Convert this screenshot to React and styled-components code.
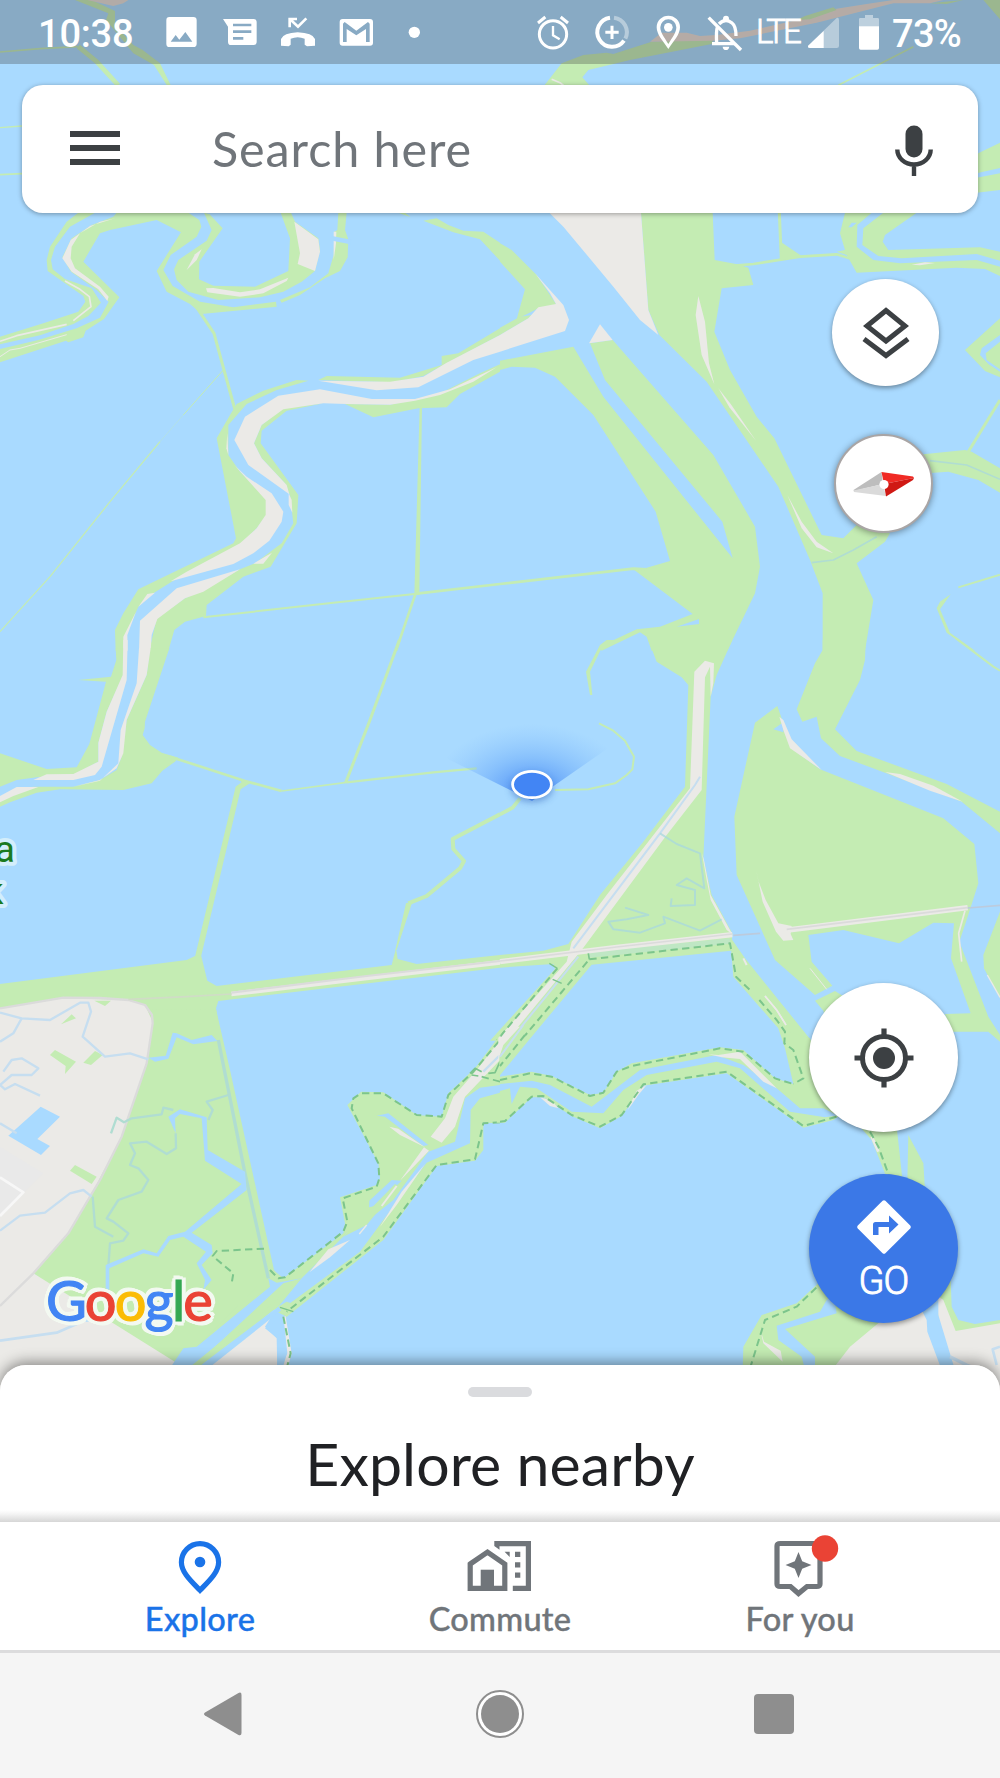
import React from "react";
import styled, { createGlobalStyle, css } from "styled-components";

const c = {
  water: "#a9daff",
  green: "#c4ecb3",
  sand: "#ebeae7",
  road: "#dbdbdb",
  creek: "#c6def0",
  marsh: "#b0ddd2",
  trail: "#7cc58c",
  ink: "#3c4043",
  grey: "#70757a",
  blue: "#1a73e8",
};

const Global = createGlobalStyle`
  * { box-sizing: border-box; }
  body { margin: 0; background: #fff; }
`;

/* ---------- layout ---------- */

const Screen = styled.div`
  width: 1000px;
  height: 1778px;
  overflow: hidden;
  display: grid;
  grid-template-rows: 1365px 157px 131px 125px;
  font-family: Lato, "Noto Sans", sans-serif;
`;

const MapArea = styled.main`
  display: grid;
  grid-template: 1365px / 1000px;
  background: ${c.water};
`;

const MapCanvas = styled.svg`
  grid-area: 1 / 1;
  display: block;
  width: 1000px;
  height: 1420px;
`;

const MapOverlay = styled.div`
  grid-area: 1 / 1;
  display: flex;
  flex-direction: column;
  z-index: 1;
`;

const StatusBar = styled.header`
  height: 64px;
  flex: none;
  display: flex;
  align-items: flex-start;
  background: rgba(60, 60, 60, 0.3);
  color: #fff;
  font-family: Roboto, sans-serif;
`;

const StatusText = styled.span`
  flex: none;
  width: ${(p) => p.$w}px;
  padding-left: ${(p) => p.$pad || 0}px;
  padding-top: ${(p) => p.$top || 0}px;
  font-size: ${(p) => p.$size}px;
  font-weight: ${(p) => p.$weight};
  letter-spacing: ${(p) => p.$track || 0}px;
  -webkit-text-stroke: ${(p) => p.$thicken || 0}px currentColor;
  line-height: 64px;
  white-space: nowrap;
`;

const StatusIcon = styled.svg`
  flex: none;
  display: block;
  width: ${(p) => p.$w || 58}px;
  height: 64px;
  fill: #fff;
`;

const Spacer = styled.div`
  flex: 1;
`;

const SearchBar = styled.div`
  flex: none;
  height: 128px;
  margin: 21px 22px 0;
  padding: 0 45px 0 48px;
  display: flex;
  align-items: center;
  background: #fff;
  border-radius: 21px;
  box-shadow: 0 1px 5px rgba(0, 0, 0, 0.35);
`;

const MenuButton = styled.button`
  width: 50px;
  height: 34px;
  padding: 0;
  border: 0;
  background: none;
  display: flex;
  flex-direction: column;
  justify-content: space-between;
  align-items: stretch;
  margin-top: -2px;
  &::before, &::after, & > span {
    content: "";
    display: block;
    height: 6px;
    background: ${c.ink};
  }
`;

const SearchField = styled.div`
  flex: 1;
  padding: 0 0 2px 92px;
  font-size: 48.5px;
  letter-spacing: 0.9px;
  color: ${c.grey};
`;

const MicIcon = styled.svg`
  width: 38px;
  height: 52px;
  margin-top: 3px;
  display: block;
`;

const Controls = styled.div`
  flex: 1;
  display: flex;
  flex-direction: column;
  align-items: center;
  align-self: flex-end;
  width: 233px;
  padding-top: 66px;
`;

const roundButton = css`
  flex: none;
  border: 0;
  padding: 0;
  border-radius: 50%;
  display: flex;
  flex-direction: column;
  align-items: center;
  justify-content: center;
`;

const MapButton = styled.button`
  ${roundButton}
  width: ${(p) => p.$size}px;
  height: ${(p) => p.$size}px;
  margin-top: ${(p) => p.$gap || 0}px;
  margin-left: ${(p) => p.$shift || 0}px;
  padding-top: ${(p) => p.$pad || 0}px;
  background: ${(p) => p.$bg || "#fff"};
  box-shadow: 0 2px 5px rgba(0, 0, 0, 0.4);
`;

const CompassButton = styled(MapButton)`
  border: 2px solid #a9a5a5;
  box-shadow: 0 1px 7px rgba(0, 0, 0, 0.4);
`;

const ButtonIcon = styled.svg`
  display: block;
  width: ${(p) => p.$w}px;
  height: ${(p) => p.$h}px;
`;

const GoLabel = styled.span`
  margin-top: 4px;
  font: 300 38px/46px Roboto, sans-serif;
  letter-spacing: -0.8px;
  color: #fff;
  -webkit-text-stroke: 0.9px #fff;
`;

const LogoRow = styled.div`
  grid-area: 1 / 1;
  align-self: end;
  justify-self: start;
  z-index: 1;
  padding: 0 0 30px 46px;
  font: 400 56px/70px Lato, sans-serif;
  letter-spacing: -1.8px;
  filter: drop-shadow(3px 1px 0 #f3f9f1) drop-shadow(-3px -1px 0 #f3f9f1)
    drop-shadow(-1px 3px 0 #f3f9f1) drop-shadow(1px -3px 0 #f3f9f1);
`;

const LogoLetter = styled.span`
  color: ${(p) => p.$color};
  -webkit-text-stroke: 1.2px ${(p) => p.$color};
`;

const BottomSheet = styled.section`
  position: relative;
  z-index: 2;
  display: flex;
  flex-direction: column;
  align-items: center;
  padding-top: 22px;
  background: linear-gradient(#fff 145px, #f4f4f4 149px, #d6d6d6 157px);
  border-radius: 26px 26px 0 0;
  box-shadow: 0 -3px 14px rgba(0, 0, 0, 0.42);
`;

const Handle = styled.div`
  width: 64px;
  height: 10px;
  border-radius: 5px;
  background: #dadbde;
`;

const SheetTitle = styled.h1`
  margin: 31px 0 0;
  font-size: 59px;
  line-height: 72px;
  font-weight: 400;
  letter-spacing: 0.1px;
  color: #202124;
`;

const TabBar = styled.nav`
  position: relative;
  z-index: 3;
  display: grid;
  grid-template-columns: 300px 300px 300px;
  justify-content: center;
  background: #fff;
  border-bottom: 3px solid #dcdcdd;
`;

const Tab = styled.a`
  display: flex;
  flex-direction: column;
  align-items: center;
  padding-top: 12px;
  font-size: 32.5px;
  line-height: 42px;
  font-weight: 500;
  letter-spacing: 0.3px;
  -webkit-text-stroke: 0.4px currentColor;
  color: ${(p) => (p.$active ? c.blue : c.grey)};
`;

const TabIcon = styled.svg`
  display: block;
  width: 90px;
  height: 64px;
  fill: currentColor;
`;

const SystemNav = styled.footer`
  display: flex;
  align-items: center;
  justify-content: space-between;
  padding: 0 205px 3px 203px;
  background: #f5f5f5;
`;

const SystemIcon = styled.svg`
  display: block;
  width: ${(p) => p.$w}px;
  margin-left: ${(p) => p.$nudge || 0}px;
  height: 50px;
  fill: #8e8e8e;
`;

/* ---------- map drawing helpers: each block is drawn at three units per pixel ---------- */

const Block = ({ x, y, children }) => (
  <g transform={`translate(${x} ${y}) scale(0.333333)`}>{children}</g>
);
const P = ({ f = c.green, d }) => <polygon points={d} fill={f} />;
const L = ({ s = c.green, w = 7, d, dash }) => (
  <polyline points={d} fill="none" stroke={s} strokeWidth={w} strokeDasharray={dash} strokeLinejoin="round" />
);
const Trail = ({ d }) => <L s={c.trail} w={6} dash="22 13" d={d} />;

function North() {
  return (
    <>
      <Block x={0} y={0}>
        <P d="225,0 275,0 345,33 345,75 400,135 428,150 480,190 512,255 500,255 462,195 400,160 318,60 325,40" />
        <P f="#e6dcd6" d="262,0 385,0 370,10 340,18" />
        <L d="0,156 120,146 235,140" w={5} />
        <L d="235,140 290,185 355,256" w={14} />
        <L d="0,383 66,378" w={4} />
        <L d="0,524 66,521" w={5} />
      </Block>
      <Block x={500} y={0}>
        <P d="130,260 185,190 250,165 320,158 340,162 455,125 640,118 635,132 390,180 265,210 247,232 272,260" />
        <P f="#eadcd5" d="450,125 485,98 560,98 600,108 650,105 750,92 900,58 1000,28 1100,12 1180,0 1330,0 1290,10 1180,10 950,68 720,115 640,122" />
        <P d="890,60 915,48 1000,22 1010,30 930,58" />
        <P d="1290,10 1390,0 1340,12" />
        <P d="1450,0 1500,0 1500,58" />
        <L d="1015,256 1240,140" w={5} />
        <P d="1430,462 1500,428 1500,504 1430,520" />
        <P d="1430,533 1500,520 1500,570 1430,578" />
        <L s={c.sand} w={5} d="155,238 180,248 192,258" />
      </Block>
      <Block x={0} y={200}>
        <P d="235,38 200,65 150,140 140,180 143,213 195,250 250,288 256,305 235,335 130,370 0,410 0,433 120,406 220,372 265,348 303,308 275,265 195,237 158,208 153,180 165,140 210,80 285,38" />
        <P d="350,38 340,50 275,75 215,115 187,172 213,215 290,270 326,305 300,353 230,385 115,420 0,447 0,487 198,422 205,427 250,412 257,392 312,357 358,292 250,185 300,100 330,90 470,60 543,97 500,165 470,213 500,275 570,312 605,342 830,320 828,305 700,322 600,305 518,258 490,210 512,165 590,110 604,80 598,60 565,38" />
        <P d="612,38 628,42 668,85 598,185 597,238 640,257 765,260 865,213 870,115 842,38 873,38 885,65 955,115 960,150 945,213 905,245 850,275 780,292 655,300 565,275 530,240 522,208 535,180 620,122 635,90" />
        <P f={c.sand} d="883,65 955,118 960,155 945,213 893,192 900,160" />
        <P f={c.sand} d="618,265 640,264 720,277 780,268 865,233 860,243 790,280 720,290 622,277" />
        <P f={c.sand} d="605,148 585,163 560,210 590,180" />
        <P f={c.sand} d="345,55 300,65 240,100 215,140 212,175 225,205 300,260 326,290 322,303 295,268 215,215 187,175 212,120 270,78" />
        <L s={c.sand} w={5} d="195,243 240,268 268,290 273,320 220,362" />
        <L s={c.sand} w={5} d="0,424 50,407 200,373" />
        <L s={c.sand} w={3} d="0,470 30,450 60,445 200,404" />
        <P d="845,308 840,300 930,262 985,220 1001,165 1003,95 1012,90 1015,38 1040,38 1035,90 1045,118 1043,172 1020,213 975,235 900,285" />
        <P f={c.sand} d="1001,95 1009,95 1008,130 1001,180" />
        <L s={c.water} w={14} d="995,115 1052,126" />
        <L d="590,322 642,400 672,510 705,630" w={9} />
        <L d="670,510 550,645" w={3} />
        <L d="550,645 480,725" w={1} />
        <L d="480,725 330,905 150,1130 0,1295" w={4} />
        <P d="690,645 710,612 790,572 890,540 925,542 830,570 740,612 685,675 685,765 720,815 800,895 800,945 770,985 720,1034 515,1145 460,1180 415,1220 380,1300 372,1352 347,1352 345,1290 370,1240 415,1168 700,1030 708,1015 650,715" />
        <P f={c.sand} d="682,700 685,765 679,745" />
        <P f={c.sand} d="703,795 740,830 815,880 850,935 845,965 808,1022 760,1060 700,1092 512,1144 560,1115 720,1030 770,985 797,945 797,900" />
        <P d="1035,612 1120,652 1255,625 1340,622 1380,582 1500,515 1500,493 1440,520 1330,575 1245,598 1170,614" />
        <P d="850,625 970,610 860,632 785,692 782,730 895,885 890,970 812,1100 730,1130 620,1215 618,1248 555,1265 523,1290 505,1352 448,1352 470,1255 555,1195 610,1170 720,1108 765,1090 845,1030 880,970 870,885 855,850 785,775 762,730 785,675" />
        <P f={c.sand} d="835,587 960,568 1115,597 1245,597 1350,568 1490,502 1420,545 1320,585 1245,602 1170,614 1040,612 970,610 850,628 785,675 762,730 785,775 860,855 868,883 745,795 703,720 735,650" />
        <P f={c.sand} d="866,880 875,900 877,938 866,915" />
        <P f={c.sand} d="420,1262 530,1165 720,1108 610,1175 555,1195 472,1257 455,1305 452,1352 417,1352" />
        <P f={c.sand} d="760,1091 790,1091 816,1058 795,1070" />
        <P f={c.sand} d="415,1220 465,1178 442,1182" />
        <P f={c.sand} d="370,1352 370,1310 408,1235 382,1305 383,1352" />
        <P d="955,540 980,528 1200,533 1325,495 1325,468 1375,460 1500,385 1500,405 1340,490 1270,528 1180,547" />
        <P f={c.sand} d="955,542 1170,545 1270,530 1340,488 1500,405 1500,455 1420,480 1255,562 1130,571" />
        <P d="1195,38 1215,38 1232,52" />
        <P d="1270,62 1310,55 1345,75 1390,92 1450,95 1500,128 1500,182 1440,118 1360,97" />
        <P d="1259,620 1266,620 1258,1185 1243,1185" />
        <L d="1500,1152 1250,1181" w={8} />
        <L d="1250,1181 1000,1208 610,1252" w={6} />
        <L d="1247,1180 1188,1352" w={8} />
      </Block>
      <Block x={500} y={200}>
        <P d="0,130 35,150 110,225 170,315 115,325 50,358 75,268 0,185" />
        <P d="0,383 60,350 95,345 85,355 0,405" />
        <P f={c.sand} d="105,220 190,315 207,360 195,393 0,455 0,405 85,355 115,322 168,312 150,280" />
        <P d="423,38 638,38 644,180 712,193 745,203 760,255 665,265 643,395 690,510 770,650 823,715 965,1005 1030,1015 1070,975 1170,1000 1155,1025 1070,1090 1120,1200 1095,1352 968,1352 968,1180 930,1080 835,860 620,545 478,405 445,330" />
        <P f={c.sand} d="148,38 423,38 445,330 475,405 420,360 340,260 190,80" />
        <L d="705,197 760,192 900,170 1010,163 1048,175" w={8} />
        <L d="838,38 844,180" w={9} />
        <P d="846,128 905,168 840,182" />
        <P d="1035,38 1020,100 1035,150 1010,155 1040,165 1070,218 1130,215 1370,203 1455,207 1500,228 1500,200 1430,180 1200,190 1120,180 1070,140 1072,75 1115,38" />
        <P f={c.water} d="1045,82 1055,68 1070,68 1055,82" />
        <P d="1150,38 1090,85 1087,135 1135,168 1205,175 1430,162 1500,182 1500,155 1440,142 1165,150 1148,125 1155,105 1250,38" />
        <P f={c.sand} d="1235,194 1275,187 1305,189 1260,196" />
        <P d="1500,355 1395,450 1455,513 1500,532 1500,515 1465,492 1440,465 1445,445 1500,405" />
        <P d="1500,425 1457,460 1460,480 1500,508" />
        <L d="1500,600 1403,758" w={9} />
        <P d="1270,763 1395,750 1415,755 1500,805 1500,878 1435,840 1345,815 1280,820" />
        <L s={c.marsh} w={5} d="1290,782 1400,795 1500,838" />
        <L s={c.marsh} w={5} d="935,1088 1000,1080 1060,1050 1130,1010" />
        <P f={c.sand} d="595,288 615,365 627,490 643,553 605,465 587,345" />
        <P f={c.sand} d="862,885 905,965 950,1025 1000,1060 950,1042 905,985" />
        <P f={c.sand} d="655,565 692,612 768,722 688,622" />
        <P d="270,430 338,420 640,765 765,980 780,1100 765,1180 682,1352 455,1352 440,1310 420,1297 305,1352 298,1340 410,1288 480,1280 578,1242 400,1108 435,1105 510,1083 467,935 280,645 165,530 105,503 35,500 0,510 0,482 220,440 310,590 698,1075 667,965 315,540" />
        <P f={c.sand} d="300,373 338,420 267,430" />
        <P f={c.water} d="530,1280 597,1257 597,1272" />
        <L d="0,1152 400,1106 440,1108" w={8} />
        <L d="1375,1162 1500,1124" w={6} />
        <P d="1352,1183 1320,1205 1310,1225 1340,1298 1415,1352 1425,1352 1350,1298 1320,1228" />
      </Block>
    </>
  );
}

function Middle() {
  return (
    <>
      <Block x={0} y={640}>
        <P d="347,25 349,60 333,110 235,120 318,125 268,312 230,382 140,387 0,340 0,440 50,420 110,412 220,405 295,365 295,310 320,215 370,105 375,25" />
        <P f={c.sand} d="370,0 383,0 380,120 305,380 285,405 220,420 100,420 140,403 220,402 295,365 295,308 320,215 368,105" />
        <P d="450,25 508,25 435,245 434,265 428,285 450,315 485,338 535,353 525,365 487,392 455,430 370,450 180,448 110,458 30,487 0,500 0,480 50,450 100,440 220,440 300,420 350,390 365,350 380,240 440,105" />
        <P f={c.sand} d="417,25 452,25 440,105 380,240 370,340 350,385 300,420 220,440 300,422 355,370 362,270 410,130" />
        <P f={c.sand} d="0,468 50,441 115,441 40,468 0,487" />
        <L d="510,350 735,423 845,453" w={8} />
        <L d="845,453 1040,427" w={5} />
        <L d="1040,427 1300,397 1430,385" w={7} />
        <L d="1198,0 1110,240 1037,428" w={9} />
        <P d="707,440 725,427 720,420 750,430 722,448 603,950 585,950" />
        <P d="0,1032 560,960 585,948 603,945 622,1022 650,1038 1175,975 1188,925 1193,957 1250,972 1500,945 1500,983 655,1083 648,1105 668,1220 0,1220" />
        <L d="1500,523 1358,597 1360,627 1392,663 1380,685 1280,768 1225,790" w={12} />
        <P d="1218,790 1237,785 1190,930 1186,930" />
        <L s={c.sand} w={14} d="694,1062 1100,1014 1500,967" />
        <L s={c.road} w={6} d="694,1058 1100,1008 1500,963" />
      </Block>
      <Block x={500} y={640}>
        <P d="0,945 130,932 205,912 300,765 430,605 555,440 565,135 545,112 470,65 445,0 697,0 650,105 632,170 610,655 635,765 697,880 693,932 275,974 85,1202 -30,1202 165,987 160,972 0,983" />
        <P d="690,890 735,955 930,1197 940,1230 865,1230 835,1165 700,1010" />
        <P f={c.sand} d="583,95 615,62 642,70 640,130 632,170 630,80 615,112 605,450 500,585 245,930 20,1202 -12,1202 200,965 215,905 320,765 570,445" />
        <P f={c.sand} d="606,640 612,660 632,765 697,883 680,870 632,780 620,720" />
        <L s={c.creek} w={6} d="600,410 585,435 480,580 220,925" />
        <L s={c.creek} w={6} d="235,950 30,1202" />
        <g opacity="0.75">
          <L s="#a9d9de" w={6} d="480,580 530,612 600,640 613,745 560,715 530,735 585,750 585,795 512,798 515,775" />
          <L s="#a9d9de" w={6} d="375,803 445,825 380,838 325,845 340,868 420,878 495,850 490,830 600,872 665,838" />
        </g>
        <L s="#bfe7c4" w={16} d="265,945 690,903" />
        <L s={c.sand} w={16} d="0,965 350,922 697,884" />
        <L s={c.road} w={5} d="0,963 350,921 697,882" />
        <P d="765,248 832,198 850,250 875,325 960,388 1330,535 1423,612 1435,730 1403,830 1378,905 1465,1130 1500,1185 1500,1205 1465,1175 1355,1175 1335,1122 1412,1120 1353,955 1362,850 1300,848 1197,910 1030,870 925,885 935,965 997,1037 945,1065 825,960 710,705 703,530" />
        <P f={c.water} d="820,268 850,247 850,277" />
        <P f={c.sand} d="838,230 850,240 875,298 965,390 870,325 850,270" />
        <P f={c.sand} d="768,688 776,725 797,780 835,850 875,858 872,882 880,900 850,902 828,875 788,785" />
        <L s={c.sand} w={3} d="930,985 980,1048" />
        <P d="945,1082 1005,1053 1080,1100 1000,1230 970,1112" />
        <L s={c.sand} w={16} d="840,873 1403,803" />
        <L s={c.road} w={5} d="860,868 1403,803" />
        <L s="#bccbdd" w={5} d="700,886 780,880" />
        <L s="#bccbdd" w={5} d="1403,804 1500,796" />
        <L s={c.sand} w={5} d="1395,812 1376,880 1385,965" />
        <P d="968,0 1097,0 1095,60 1080,120 1005,268 1070,333 1340,432 1500,515 1500,580 1385,485 1155,398 1020,348 963,295 950,230 907,245 890,208 945,70 968,30" />
        <P f={c.sand} d="1155,396 1200,402 1300,437 1388,485 1290,452" />
        <L d="1368,-5 1480,80 1500,92" w={6} />
        <P d="1500,815 1450,945 1452,985 1500,1075" />
        <L s={c.sand} w={4} d="1462,1005 1500,1072" />
        <P d="350,0 320,0 300,15 258,95 270,165 277,165 270,95 308,18" />
        <L d="297,250 340,272 375,302 402,350 397,388 380,405 345,430 265,448 165,450" w={6} />
        <L d="0,523 38,503 60,475" w={11} />
        <L s={c.sand} w={6} d="730,955 740,975" />
        <L s={c.sand} w={4} d="795,1068 830,1110 858,1155" />
        <L s={c.trail} w={5} d="265,940 268,958" />
        <Trail d="268,958 690,910 708,1010 750,1050" />
        <Trail d="262,965 62,1202" />
        <Trail d="172,985 -10,1202" />
        <L s={c.trail} w={4} d="148,970 172,985" />
        <L s={c.trail} w={4} d="158,1018 185,1030" />
      </Block>
    </>
  );
}

function South() {
  return (
    <>
      <Block x={0} y={960}>
        <P d="0,150 648,148 690,330 822,930 840,955 910,950 640,1230 500,1230 100,940" />
        <P d="820,930 850,955 1030,820 1035,790 1020,712 1130,675 1140,655 1135,610 1042,435 1083,395 1150,397 1250,465 1325,470 1345,400 1425,325 1500,225 1500,490 1450,488 1450,570 1425,602 1310,618 1150,840 860,1070 820,1050 600,1230 520,1230 700,1050" />
        <P f={c.sand} d="0,145 190,115 385,120 435,135 458,185 440,310 365,530 270,710 205,820 100,940 540,1215 560,1400 0,1400" />
        <P f={c.sand} d="600,1225 830,1045 795,1100 830,1135 832,1225" />
        <P f="#e9e9e9" d="0,560 130,640 72,697 0,768" />
        <L s="#f7f7f7" w={8} d="0,652 70,697 0,768" />
        <L s={c.road} w={7} d="0,145 190,113 300,114 385,120 435,135 456,165 458,190 440,310 365,530 300,660 270,710 205,820 100,940 0,1038" />
        <L s="#d0dcc6" w={5} d="385,118 560,110 695,102" />
        <P f={c.water} d="122,440 180,470 112,537 150,558 123,585 25,527" />
        <P d="283,122 333,122 315,138" />
        <P d="183,193 215,163 228,175" />
        <P d="165,270 228,305 195,342 197,318 150,285" />
        <P d="250,308 285,273 308,285 273,315" />
        <P d="225,615 290,650 275,672 210,632" />
        <L s={c.creek} d="0,158 65,175 150,180 240,128 265,128 273,155 248,230 315,290 390,280 445,298" />
        <L s={c.creek} d="65,175 40,220 0,245" />
        <L s={c.creek} d="0,812 60,767 135,758 210,700 250,690 275,710" />
        <L s={c.creek} d="0,490 50,520" />
        <L s={c.creek} d="10,335 35,300 65,295 115,325 95,345 35,345 0,375 15,388 45,372 120,407" />
        <L s={c.creek} w={8} d="0,1142 170,1118 235,1090" />
        <P f={c.water} d="225,1088 265,1070 290,1082" />
        <P f={c.water} d="445,293 497,287 518,218 530,220 575,240 635,225 652,243 580,253 530,232 505,296 465,305" />
        <L s={c.marsh} w={10} d="655,240 735,640 805,955" />
        <L s={c.marsh} w={7} d="685,405 620,425 638,450 625,480" />
        <L s={c.marsh} w={7} d="520,450 490,443 485,463 395,475 372,487 350,473 333,520" />
        <L s={c.marsh} w={7} d="527,520 528,565 500,582 440,545 390,550 405,580 390,615 415,625 445,660 425,695 355,720 320,775 340,785 385,820 370,842 330,850 325,920" />
        <L s={c.marsh} w={7} d="278,710 285,800 340,830" />
        <P f={c.water} d="505,470 540,448 620,472 623,570 735,635 740,690 575,818 635,855 638,880 605,915 635,960 610,990 615,960 590,910 618,875 550,830 510,840 475,890 430,880 328,925 328,990 317,985 317,915 430,868 470,880 505,828 555,815 725,672 615,602 605,475 540,462 525,475 527,520" />
        <P f={c.water} d="805,955 830,968 905,955 840,1000 565,1225 510,1225 550,1165 590,1160 810,980" />
        <P f={c.water} d="1500,375 1440,383 1395,415 1365,545 1285,575 1180,720 1080,800 1040,820 905,955 835,1040 590,1225 625,1225 870,1030 1080,875 1150,780 1280,608 1410,550 1412,450 1440,415 1500,398" />
        <P d="905,955 850,970 575,1225 592,1225" />
        <P f={c.water} d="1130,467 1165,460 1285,555 1270,558 1155,470" />
        <P f={c.sand} d="1168,500 1195,506 1275,562 1200,525" />
        <P f={c.sand} d="1272,562 1287,572 1200,662" />
        <P f={c.water} d="1175,660 1205,662 1125,738 1107,742 1108,722" />
        <P d="1185,672 1195,678 1100,795 1030,830" />
        <L s={c.sand} w={6} d="1190,678 1145,738" />
        <L s={c.sand} w={4} d="1100,795 1078,822" />
        <P f={c.sand} d="1050,840 985,868 928,937 990,892" />
        <P f={c.sand} d="1275,612 1205,695 1138,803 1190,735" />
        <P f={c.sand} d="1500,240 1500,300 1395,410 1365,500 1325,548 1292,530 1335,475 1360,410 1430,330" />
        <L s={c.creek} w={7} d="1500,285 1450,335" />
        <L s={c.sand} w={14} d="850,1070 868,1180 855,1225" />
        <P f={c.water} d="795,1105 850,1065 862,1180 845,1215 832,1215 832,1135" />
        <P d="835,1040 860,1025 890,1035 860,1070" />
        <Trail d="792,866 650,873 638,888 700,940 695,970" />
        <Trail d="810,930 835,955 855,952 1030,815 1042,785 1028,715 1130,680 1138,655 1135,610 1055,445 1060,415 1083,400 1150,400 1250,465 1325,470 1345,405 1420,335 1500,240" />
        <Trail d="1500,487 1450,490 1425,598 1310,615 1150,830 860,1055" />
        <L s={c.trail} w={4} d="840,1042 880,1055" />
        <Trail d="850,1070 872,1180 860,1225" />
        <L s={c.trail} w={5} d="1410,340 1425,325 1445,335" />
        <L s={c.trail} w={5} d="1415,345 1435,348" />
        <L s={c.trail} w={5} dash="22 13" d="1445,350 1500,365" />
        <L s={c.trail} w={5} d="1465,340 1485,338 1500,305" />
      </Block>
      <Block x={500} y={960}>
        <P d="-2,228 60,200 85,242 -2,348" />
        <P f={c.sand} d="-5,233 30,200 60,200 10,255 -5,300" />
        <L s={c.creek} w={6} d="70,195 0,290" />
        <Trail d="75,225 0,318" />
        <L s={c.trail} w={5} dash="22 13" d="15,212 0,232" />
        <P d="0,350 95,335 155,348 270,405 310,398 350,335 395,310 660,262 730,270 825,355 880,372 855,265 835,205 930,235 935,250 1010,465 970,445 900,445 830,385 730,315 650,285 420,330 275,440 150,375 95,362 0,372" />
        <P d="0,393 30,385 35,432 60,380 110,385 215,455 310,460 370,390 440,345 650,305 720,325 870,455 975,472 1020,465 1000,480 910,503 680,340 430,377 365,468 300,505 215,468 130,412 95,412 15,488 -10,488" />
        <P f={c.sand} d="625,283 655,285 720,275 760,315 830,385 790,365 720,297 665,292" />
        <P f={c.sand} d="440,375 415,405 382,452 410,392" />
        <P f={c.sand} d="120,412 155,422 175,445 150,438" />
        <Trail d="0,360 90,340 155,350 270,408 310,398 350,335 395,318 660,265 730,275 825,355 880,372" />
        <Trail d="778,120 830,180 855,215 853,250 880,270 910,355 880,372" />
        <L s={c.sand} w={5} d="795,108 830,150 858,195" />
        <Trail d="0,485 15,483 95,410 130,408 215,465 300,500 365,465 430,373 680,335 910,498 1010,470" />
        <P d="1080,500 1190,500 1208,665 1165,665 1115,540" />
        <L s={c.sand} w={8} d="1115,530 1135,575" />
        <P d="1225,525 1270,610 1275,690 1222,665" />
        <Trail d="1110,515 1135,560 1170,655" />
        <P d="955,970 1352,960 1355,1040 1375,1080 1425,1092 1500,1080 1500,1230 728,1230 730,1160 785,1065 890,1030" />
        <P f={c.sand} d="1000,1225 1050,1160 1140,1085 1280,1050 1500,1225" />
        <P f={c.sand} d="1310,1005 1330,1020 1367,1113 1500,1090 1500,1400 1340,1400" />
        <P f={c.water} d="1265,1050 1315,1010 1315,1065 1365,1230 1325,1230 1282,1115 1280,1080" />
        <P f={c.water} d="1000,1000 1010,1060 855,1107 945,1190 945,1230 915,1230 905,1190 835,1140 830,1097 960,1055 980,1020" />
        <P f={c.sand} d="780,1105 792,1145 842,1172 848,1205 790,1150" />
        <L s={c.creek} w={8} d="1500,1160 1478,1168 1490,1215" />
        <L s={c.creek} w={10} d="1350,1190 1400,1215 1460,1240" />
        <Trail d="750,1225 795,1080 890,1040 960,972" />
      </Block>
    </>
  );
}

const MapView = () => (
  <MapCanvas viewBox="0 0 1000 1420" aria-label="Map">
    <defs>
      <radialGradient id="beam" gradientUnits="userSpaceOnUse" cx="0" cy="0" r="1" gradientTransform="translate(532 792) scale(100 68)">
        <stop offset="0.1" stopColor="#4285f4" stopOpacity="0.8" />
        <stop offset="0.5" stopColor="#4f96f8" stopOpacity="0.38" />
        <stop offset="1" stopColor="#74b2fc" stopOpacity="0" />
      </radialGradient>
      <filter id="soft" x="-50%" y="-50%" width="200%" height="200%">
        <feGaussianBlur stdDeviation="3.5" />
      </filter>
    </defs>
    <North />
    <Middle />
    <South />
    <path d="M532 801 L430 750 L430 700 L640 700 L640 726 Z" fill="url(#beam)" />
    <ellipse cx="532" cy="788" rx="21" ry="14" fill="#2b5fb8" opacity="0.5" filter="url(#soft)" />
    <ellipse cx="532" cy="784.5" rx="19.4" ry="13.2" fill="#4285f4" stroke="#fff" strokeWidth="2.8" />
    <g fontFamily="Roboto, sans-serif" fontSize="37" fill="#1a7a1f" stroke="#d3eefb" strokeWidth="8" strokeLinejoin="round" paintOrder="stroke" textAnchor="end">
      <text x="15" y="861.5">a</text>
      <text x="3.5" y="904">k</text>
    </g>
  </MapCanvas>
);

/* ---------- screen ---------- */

const LOGO = [
  ["G", "#4285f4"],
  ["o", "#ea4335"],
  ["o", "#fbbc05"],
  ["g", "#4285f4"],
  ["l", "#34a853"],
  ["e", "#ea4335"],
];

const Status = () => (
  <StatusBar>
    <StatusText $w={152} $pad={38} $size={38} $weight={500} $track={-0.2} $top={2}>10:38</StatusText>
    <StatusIcon viewBox="456 0 174 192">
      <path fillRule="evenodd" d="M508 51H580Q590 51 590 61V131Q590 141 580 141H508Q499 141 499 131V61Q499 51 508 51ZM512 125H577L556 96L538 119L527 105Z" />
    </StatusIcon>
    <StatusIcon viewBox="630 0 174 192">
      <path fillRule="evenodd" d="M669 57H760Q770 57 770 67V125Q770 135 760 135H693Q684 135 684 125V80ZM699 71V79H754V71ZM699 91V99H754V91ZM699 111V119H730V111Z" />
    </StatusIcon>
    <StatusIcon viewBox="804 0 174 192">
      <path d="M843 137V117Q850 99 893 97Q938 99 945 117V137L921 139L914 134V116Q893 107 872 116V134L866 139Z" />
      <path d="M872 59L894 80L919 55M869 82V57H891" fill="none" stroke="#fff" strokeWidth="8" />
    </StatusIcon>
    <StatusIcon viewBox="978 0 174 192">
      <path fillRule="evenodd" d="M1028 57H1110Q1119 57 1119 66V128Q1119 137 1110 137H1028Q1019 137 1019 128V66Q1019 57 1028 57ZM1029 71V126H1040V87L1069 106L1098 87V126H1109V71L1104 66L1069 92L1034 66Z" />
    </StatusIcon>
    <StatusIcon viewBox="1152 0 174 192">
      <circle cx="1243" cy="97" r="17" />
    </StatusIcon>
    <Spacer />
    <StatusIcon viewBox="72 0 174 192">
      <g fill="none" stroke="#fff" strokeWidth="9">
        <circle cx="159" cy="103" r="41" />
        <path d="M159 78V106L179 118" strokeWidth="7" />
        <path d="M114 69L136 51M204 69L182 51" strokeWidth="9" />
      </g>
    </StatusIcon>
    <StatusIcon viewBox="246 0 174 192">
      <g fill="none" stroke="#fff" strokeWidth="12">
        <path d="M330 53A44 44 0 1 0 372 122" />
        <path d="M342 53A44 44 0 0 1 376 116" opacity=".4" />
        <path d="M336 77V117M316 97H356" strokeWidth="9" />
      </g>
    </StatusIcon>
    <StatusIcon viewBox="420 0 174 192">
      <path fillRule="evenodd" d="M505 147C487 121 470 103 470 82A35 35 0 0 1 540 82C540 103 523 121 505 147ZM505 132C518 111 529 98 529 82A24 24 0 0 0 481 82C481 98 492 111 505 132Z" />
      <circle cx="505" cy="82" r="13" />
    </StatusIcon>
    <StatusIcon viewBox="594 0 174 192">
      <g fill="none" stroke="#fff" strokeWidth="10">
        <path d="M652 82Q648 92 650 131M636 131H705M657 72Q676 52 696 69Q708 78 708 108" />
        <path d="M626 53L723 150" />
      </g>
      <circle cx="678" cy="56" r="9" />
      <path d="M668 140H688Q686 150 678 150Q669 150 668 140Z" />
    </StatusIcon>
    <StatusText $w={49} $size={33} $weight={300} $track={-2.8} $thicken={0.8}>LTE</StatusText>
    <StatusIcon $w={48} viewBox="915 0 144 192">
      <path d="M1010 54Q1017 52 1017 60V138Q1017 144 1010 144H930Q920 143 926 136Z" opacity=".4" />
      <path d="M971 93V144H930Q920 143 926 136Z" />
    </StatusIcon>
    <StatusIcon $w={39} viewBox="1060 0 117 192">
      <path d="M1078 80V58Q1078 54 1082 54H1096V45H1120V54H1134Q1138 54 1138 58V80Z" opacity=".45" />
      <path d="M1078 79H1138V144Q1138 149 1133 149H1083Q1078 149 1078 144Z" />
    </StatusIcon>
    <StatusText $w={108} $size={38} $weight={500} $track={-0.7} $top={2}>73%</StatusText>
  </StatusBar>
);

export default function App() {
  return (
    <>
      <Global />
      <Screen>
        <MapArea>
          <MapView />
          <LogoRow>
            {LOGO.map(([ch, color], i) => (
              <LogoLetter key={i} $color={color}>{ch}</LogoLetter>
            ))}
          </LogoRow>
          <MapOverlay>
            <Status />
            <SearchBar>
              <MenuButton aria-label="Menu"><span /></MenuButton>
              <SearchField>Search here</SearchField>
              <MicIcon viewBox="0 0 38 52" fill={c.ink}>
                <rect x="10.5" y="0.5" width="17" height="32" rx="8.5" />
                <path d="M2.3 24.5A16.7 15 0 0 0 35.7 24.5M19 39V51" fill="none" stroke={c.ink} strokeWidth="4.4" />
              </MicIcon>
            </SearchBar>
            <Controls>
              <MapButton $size={107} $shift={4} aria-label="Layers">
                <ButtonIcon $w={48} $h={52} viewBox="0 0 48 52">
                  <path d="M24 3.5L43 19L24 34L5 19ZM2 32L24 48.5L46 32" fill="none" stroke={c.ink} strokeWidth="5" />
                </ButtonIcon>
              </MapButton>
              <CompassButton $size={99} $gap={48} aria-label="Compass">
                <ButtonIcon $w={62} $h={26} viewBox="0 0 62 26">
                  <path d="M28.5 1L0.5 19L1 20L30 13Z" fill="#bdbdbd" />
                  <path d="M0.5 19.5L1 21L33 25L30 13Z" fill="#dadada" />
                  <path d="M28.5 1L60 5.5L61 7L31 13Z" fill="#f02a24" />
                  <path d="M61 7L60 9L33 25.5L31 13Z" fill="#d01914" />
                  <circle cx="31" cy="13.5" r="4.6" fill="#fff" />
                </ButtonIcon>
              </CompassButton>
              <MapButton $size={149} $gap={450} aria-label="My location">
                <ButtonIcon $w={60} $h={60} viewBox="0 0 60 60">
                  <circle cx="30" cy="30" r="21.5" fill="none" stroke={c.ink} strokeWidth="5" />
                  <circle cx="30" cy="30" r="11" fill={c.ink} />
                  <path d="M30 0.5V7M30 53V59.5M0.5 30H7M53 30H59.5" stroke={c.ink} strokeWidth="5.2" />
                </ButtonIcon>
              </MapButton>
              <MapButton $size={149} $gap={42} $pad={7} $bg="#3b78e7" aria-label="Directions">
                <ButtonIcon $w={54} $h={54} viewBox="0 0 54 54">
                  <path d="M25.6 0.8Q27 -0.4 28.4 0.8L53.2 25.6Q54.4 27 53.2 28.4L28.4 53.2Q27 54.4 25.6 53.2L0.8 28.4Q-0.4 27 0.8 25.6Z" fill="#fff" />
                  <path d="M16 35V24.5Q16 22 18.5 22H32V15.5L41.5 24.5L32 33.5V27H21.5V35Z" fill="#3b78e7" />
                </ButtonIcon>
                <GoLabel>GO</GoLabel>
              </MapButton>
            </Controls>
          </MapOverlay>
        </MapArea>

        <BottomSheet>
          <Handle />
          <SheetTitle>Explore nearby</SheetTitle>
        </BottomSheet>

        <TabBar>
          <Tab $active>
            <TabIcon viewBox="0 0 90 64">
              <path d="M45 56.3C36.5 47.5 26.4 38.5 26.4 28.2A18.6 18.6 0 0 1 63.6 28.2C63.6 38.5 53.5 47.5 45 56.3Z" fill="none" stroke="currentColor" strokeWidth="5.2" />
              <circle cx="45" cy="28" r="5.3" />
            </TabIcon>
            Explore
          </Tab>
          <Tab>
            <TabIcon viewBox="0 0 90 64">
              <path d="M15.2 30L32.5 18.2L49.8 30V54.3H15.2Z" fill="none" stroke="currentColor" strokeWidth="5.2" />
              <path d="M25.7 35.7H39V54H25.7Z" />
              <path d="M39.3 7H76V57H57.8V51.8H70.8V12.2H44.5V15.8L39.3 12Z" />
              <path d="M60 17.7H65.3V22.9H60ZM60 28.2H65.3V33.4H60ZM60 38.6H65.3V43.8H60ZM49.6 17.7H54.7V22.9Z" />
            </TabIcon>
            Commute
          </Tab>
          <Tab>
            <TabIcon viewBox="0 0 90 64">
              <path d="M25.5 9.5H61.5Q65 9.5 65 12V50Q65 52.5 61.5 52.5H52L43.5 59.5L35.5 52.5H25.5Q22 52.5 22 50V12Q22 9.5 25.5 9.5Z" fill="none" stroke="currentColor" strokeWidth="5.2" />
              <path d="M43.5 18L47.2 27.3L56.5 31L47.2 34.7L43.5 44L39.8 34.7L30.5 31L39.8 27.3Z" />
              <circle cx="70" cy="14.5" r="13.2" fill="#ea4335" />
            </TabIcon>
            For you
          </Tab>
        </TabBar>

        <SystemNav>
          <SystemIcon $w={40} viewBox="0 0 40 50">
            <path d="M35.5 4Q38.5 2.5 38.5 6V44Q38.5 47 35.5 46L2 26.5Q0 25 2 23.5Z" />
          </SystemIcon>
          <SystemIcon $w={50} $nudge={3} viewBox="0 0 50 50">
            <circle cx="25" cy="25" r="23" fill="#fff" stroke="#8e8e8e" strokeWidth="2" />
            <circle cx="25" cy="25" r="19" />
          </SystemIcon>
          <SystemIcon $w={42} viewBox="0 0 42 50">
            <rect x="1" y="5" width="40" height="40" rx="4" />
          </SystemIcon>
        </SystemNav>
      </Screen>
    </>
  );
}
